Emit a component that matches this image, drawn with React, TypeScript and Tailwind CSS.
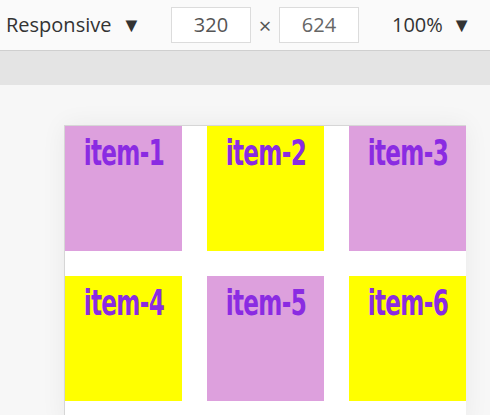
const items = [
  { label: "item-1", bg: "bg-[#dda0dd]" },
  { label: "item-2", bg: "bg-[#ffff00]" },
  { label: "item-3", bg: "bg-[#dda0dd]" },
  { label: "item-4", bg: "bg-[#ffff00]" },
  { label: "item-5", bg: "bg-[#dda0dd]" },
  { label: "item-6", bg: "bg-[#ffff00]" },
];

export default function App() {
  return (
    <div className="w-[490px] h-[415px] overflow-hidden bg-[#f7f7f7] font-['Open_Sans',sans-serif]">
      {/* Toolbar */}
      <div className="h-[51px] bg-[#fafafa] border-b border-[#cfcfcf] flex items-center text-[#333] text-[20px]">
        <div className="pl-[6px] w-[171px] flex items-center gap-[10px]">
          <span>Responsive</span>
          <span className="text-[20px] leading-none">▼</span>
        </div>
        <div className="w-[80px] h-[36px] border border-[#dcdcdc] bg-white flex items-center justify-center text-[#555]">
          320
        </div>
        <span className="w-[28px] text-center text-[#555] text-[22px] leading-none">×</span>
        <div className="w-[80px] h-[36px] border border-[#dcdcdc] bg-white flex items-center justify-center text-[#666]">
          624
        </div>
        <div className="ml-[33px] flex items-center gap-[9px]">
          <span>100%</span>
          <span className="text-[20px] leading-none">▼</span>
        </div>
      </div>

      {/* Gray band */}
      <div className="h-[34px] bg-[#e4e4e4]" />

      {/* Viewport area */}
      <div className="pt-[40px] pl-[64px]">
        <div className="w-[402px] h-[300px] bg-white border-l border-t border-[#d6d6d6] shadow-[0_0_24px_rgba(0,0,0,0.06)]">
          <div className="grid grid-cols-3 gap-[25px] w-[401px]">
            {items.map((item) => (
              <div key={item.label} className={`${item.bg} h-[125px] flex justify-center`}>
                <h1 className="pt-[7px] text-[35px] font-bold text-[#8a2be2] leading-[1.15] font-['DejaVu_Sans',sans-serif] tracking-[-1px] scale-x-[0.66] whitespace-nowrap">
                  {item.label}
                </h1>
              </div>
            ))}
          </div>
        </div>
      </div>
    </div>
  );
}
